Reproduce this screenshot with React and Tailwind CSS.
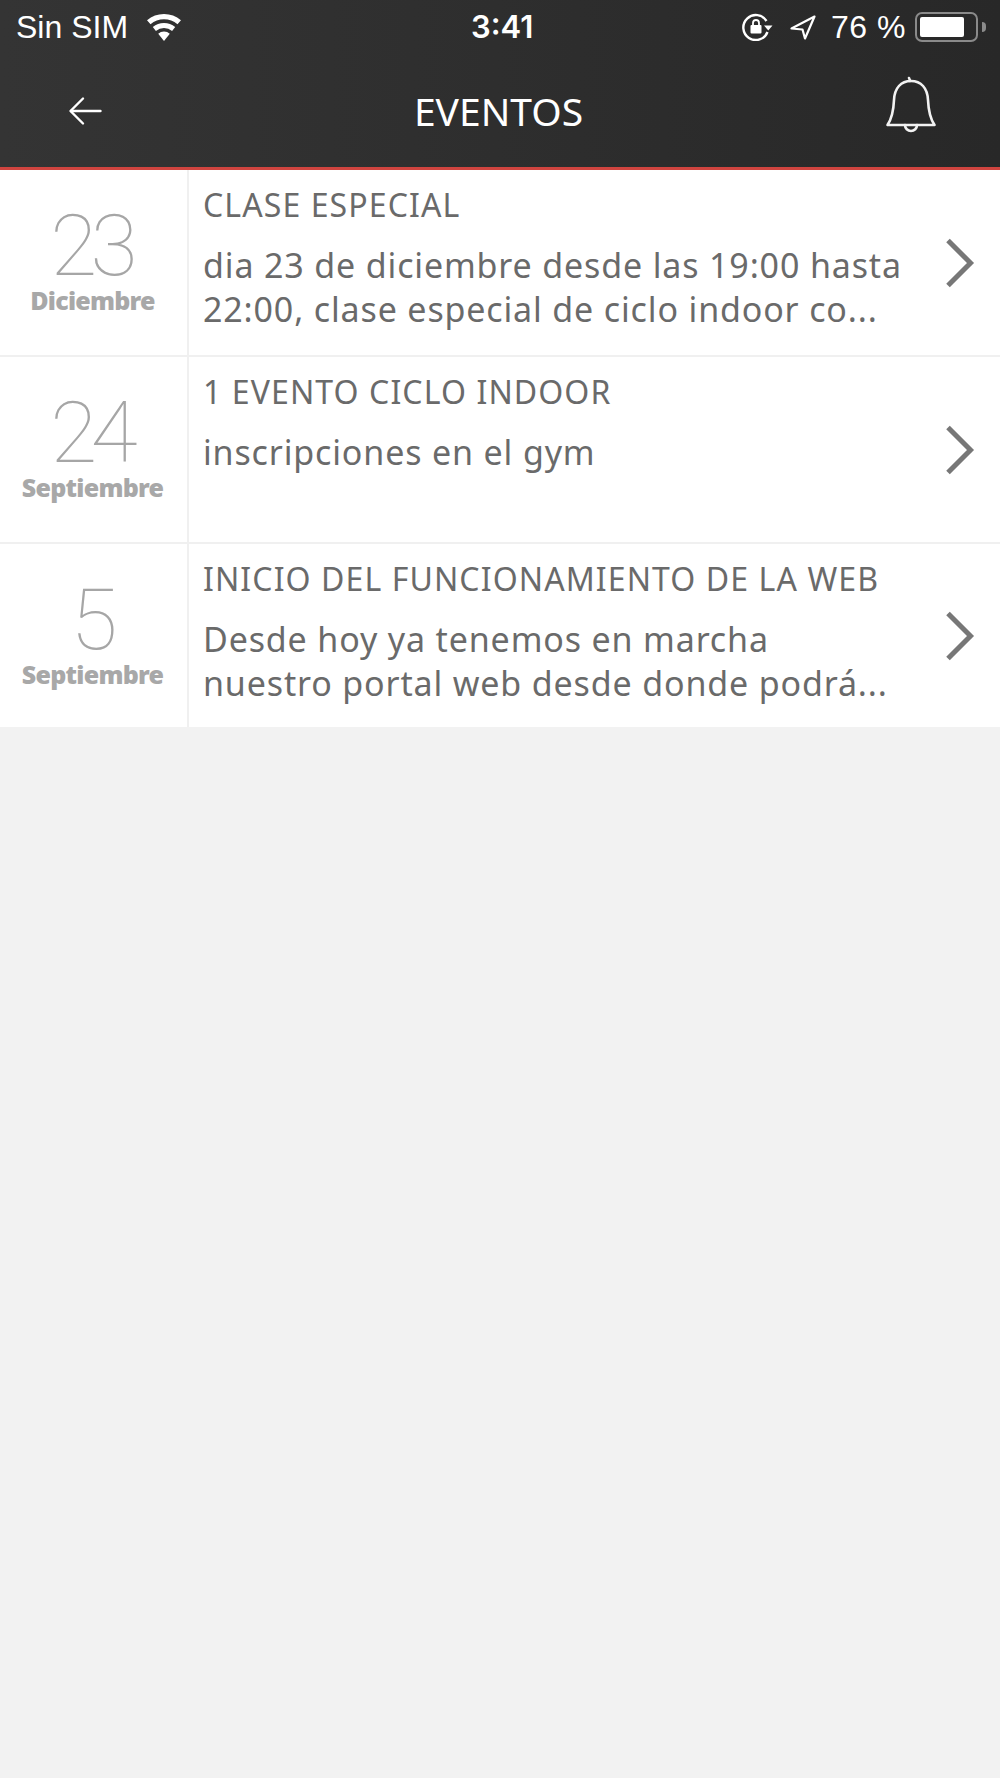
import React from 'react';

const eventos = [
  {
    dia: '23',
    mes: 'Diciembre',
    titulo: 'CLASE ESPECIAL',
    texto: ['dia 23 de diciembre desde las 19:00 hasta', '22:00, clase especial de ciclo indoor co...'],
  },
  {
    dia: '24',
    mes: 'Septiembre',
    titulo: '1 EVENTO CICLO INDOOR',
    texto: ['inscripciones en el gym'],
  },
  {
    dia: '5',
    mes: 'Septiembre',
    titulo: 'INICIO DEL FUNCIONAMIENTO DE LA WEB',
    texto: ['Desde hoy ya tenemos en marcha', 'nuestro portal web desde donde podrá...'],
  },
];

const WifiIcon = () => (
  <svg width="38" height="27" viewBox="0 0 38 28" fill="white">
    <path d="M19 28l-6-7.500a9 9 0 0 1 12 0z" />
    <path d="M10.600 17.600l-3.200-4a18 18 0 0 1 23.200 0l-3.200 4a13 13 0 0 0-16.800 0z" />
    <path d="M5 10.600L1.400 6.400a27.500 27.500 0 0 1 35.200 0L33 10.600a22 22 0 0 0-28 0z" />
  </svg>
);

const RotationLockIcon = () => (
  <svg width="31" height="28" viewBox="0 0 31 28" fill="none" stroke="white" strokeWidth="2.400">
    <path d="M24.500 8A12.500 12.500 0 1 0 25.500 19" />
    <path d="M22 12.500h8.500l-4.200 5z" fill="white" stroke="none" />
    <rect x="8.500" y="12" width="11" height="8.500" rx="1" fill="white" stroke="none" />
    <path d="M11 12.500V10a3 3 0 0 1 6 0v2.500" strokeWidth="1.800" />
  </svg>
);

const LocationIcon = () => (
  <svg width="26" height="25" viewBox="0 0 26 25" fill="none" stroke="white" strokeWidth="2.200" strokeLinejoin="round">
    <path d="M24.500 1.500L1.500 13.500L12.500 14.500L15 23.500z" />
  </svg>
);

const BatteryIcon = () => (
  <div className="flex items-center">
    <div className="flex h-[30px] w-[63px] items-center rounded-[7px] border-2 border-[#8a8a8a] p-[3px]">
      <div className="h-full w-[44px] rounded-[2px] bg-white" />
    </div>
    <div className="ml-[4px] h-[10px] w-[4px] rounded-r-full bg-[#8a8a8a]" />
  </div>
);

const BackIcon = () => (
  <svg width="34" height="30" viewBox="0 0 34 30" fill="none" stroke="white" strokeWidth="2.400" strokeLinecap="round" strokeLinejoin="round">
    <path d="M32.500 15H3" />
    <path d="M15 2.500L2.500 15L15 27.500" />
  </svg>
);

const BellIcon = () => (
  <svg width="52" height="60" viewBox="0 0 52 60" fill="none" stroke="#f2f2f2" strokeWidth="2.600" strokeLinecap="round" strokeLinejoin="round" className="-mt-[9px]">
    <path d="M24 2c.500 1 1 2 1 3" />
    <path d="M26 5C16 5 9.500 12 9 24C8.500 36 6.500 43 2.500 49H49.500C45.500 43 43.500 36 43 24C42.500 12 36 5 26 5z" />
    <path d="M20 49a6 6 0 0 0 12 0" />
  </svg>
);

const ChevronIcon = () => (
  <svg width="32" height="52" viewBox="0 0 32 52" fill="none" stroke="#777777" strokeWidth="5" className="ml-[4px]">
    <path d="M4 3.500L26.500 26L4 48.500" />
  </svg>
);

const StatusBar = () => (
  <div className="relative flex h-[54px] items-center justify-between pl-[16px] pr-[14px] font-['Liberation_Sans',sans-serif] text-[32px] text-white">
    <div className="flex items-center gap-[17px]">
      <span>Sin SIM</span>
      <WifiIcon />
    </div>
    <span className="absolute left-[471px] top-[4px] font-['Inter',sans-serif] text-[31px] font-semibold">3:41</span>
    <div className="flex items-center">
      <RotationLockIcon />
      <div className="ml-[17px]">
        <LocationIcon />
      </div>
      <span className="ml-[15px] mr-[9px] tracking-[0.500px]">76 %</span>
      <BatteryIcon />
    </div>
  </div>
);

const Header = () => (
  <div className="border-b-[3px] border-[#d0443f] bg-gradient-to-r from-[#343434] to-[#282828]">
    <StatusBar />
    <div className="flex h-[113px] items-center justify-between pl-[68px] pr-[63px]">
      <BackIcon />
      <span className="ml-[10px] pt-[2px] font-['Noto_Sans',sans-serif] text-[39px] text-white">EVENTOS</span>
      <BellIcon />
    </div>
  </div>
);

const EventoRow = ({ evento }) => (
  <div className="flex h-[187px] border-b-2 border-[#f0f0f0] bg-white last:h-[183px] last:border-b-0">
    <div className="flex w-[189px] shrink-0 flex-col items-center border-r-2 border-[#f0f0f0] pt-[41px]">
      <span className="-ml-[6px] font-['Roboto',sans-serif] text-[86px] leading-[70px] font-thin tracking-[-0.08em] text-[#a6a6a6]">
        {evento.dia}
      </span>
      <span className="-ml-[2px] mt-[4px] font-['Noto_Sans',sans-serif] text-[25px] leading-[30px] font-black tracking-[-0.03em] text-[#a8a8a8]">
        {evento.mes}
      </span>
    </div>
    <div className="min-w-0 flex-1 pl-[14px] pt-[15px] font-['Noto_Sans',sans-serif] text-[#6a6a6a]">
      <div className="text-[32px] leading-[40px] tracking-[1.100px]">{evento.titulo}</div>
      <div className="mt-[18px] text-[34px] leading-[44px] tracking-[0.850px] whitespace-nowrap">
        {evento.texto.map((linea) => (
          <div key={linea}>{linea}</div>
        ))}
      </div>
    </div>
    <div className="flex w-[60px] shrink-0 items-center">
      <ChevronIcon />
    </div>
  </div>
);

export default function App() {
  return (
    <div className="min-h-[1778px] bg-[#f2f2f2]">
      <Header />
      {eventos.map((evento) => (
        <EventoRow key={evento.titulo} evento={evento} />
      ))}
    </div>
  );
}
